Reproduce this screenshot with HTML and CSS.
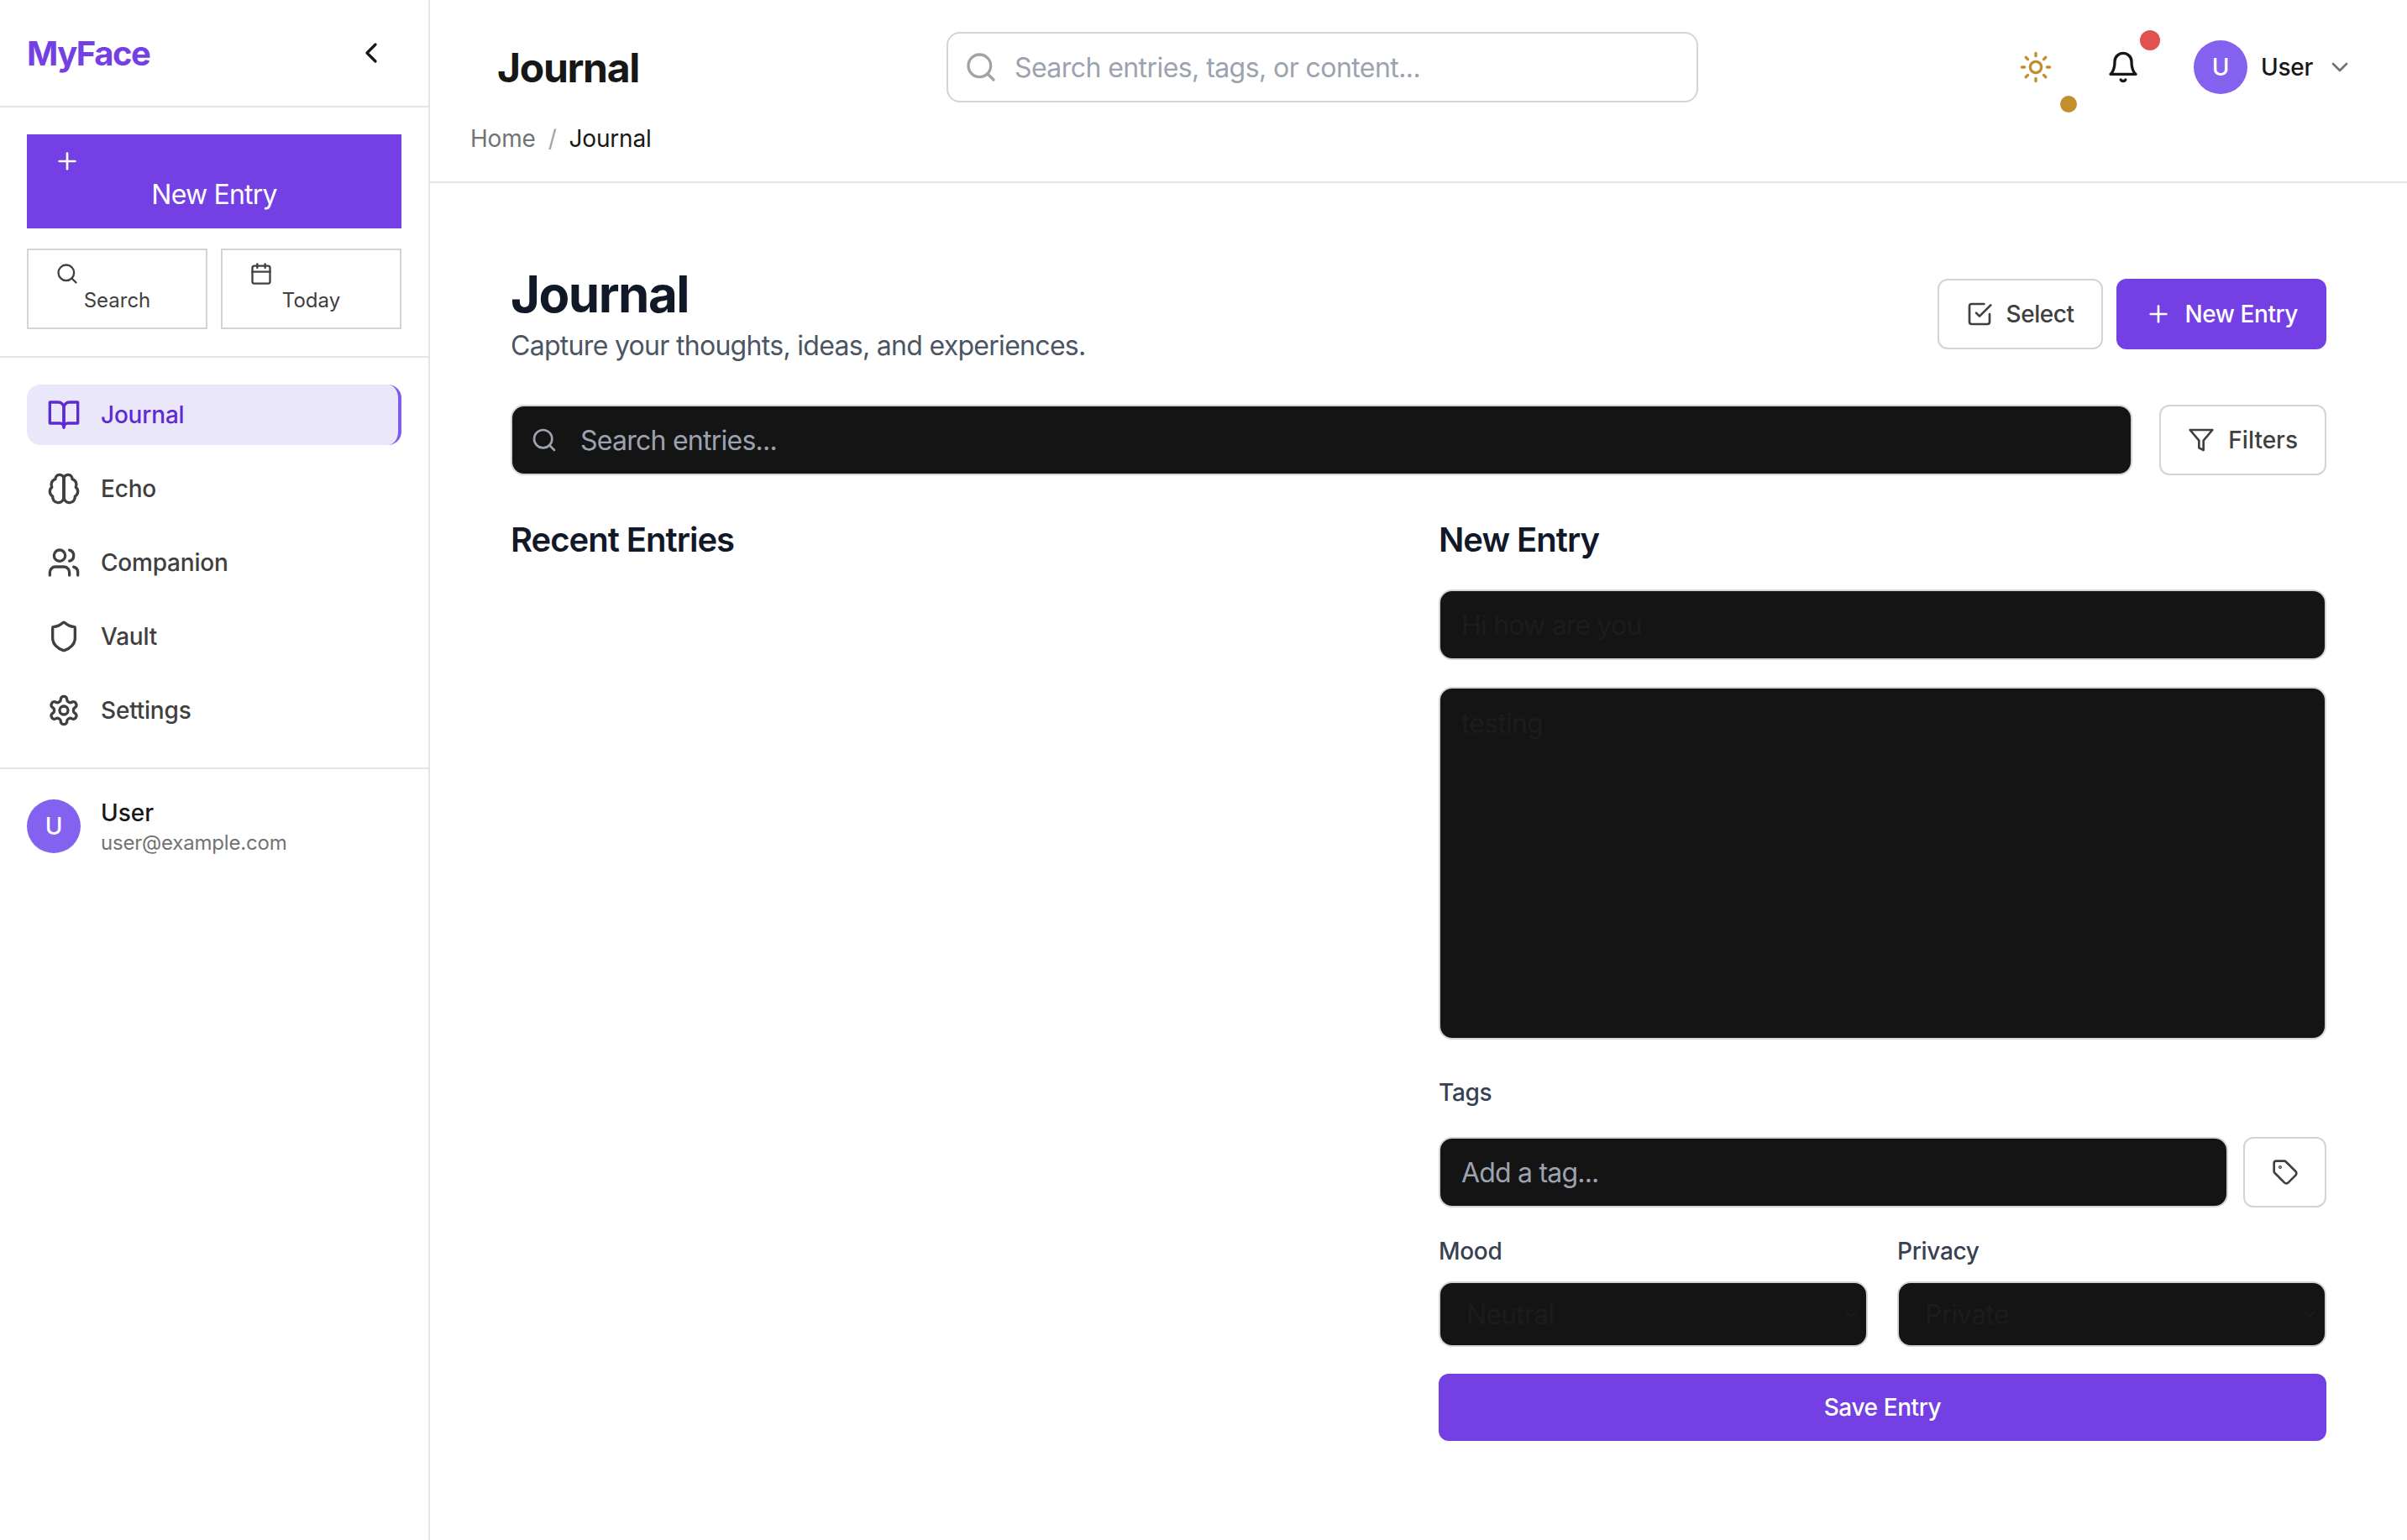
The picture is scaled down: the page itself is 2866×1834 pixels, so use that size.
FILE: index.html
```html
<!DOCTYPE html>
<html lang="en">
<head>
    <meta charset="UTF-8">
    <meta name="viewport" content="width=device-width, initial-scale=1.0">
    <title>MyFace - Journal</title>
    <link rel="stylesheet" href="styles.css">
</head>
<body>
    <!-- icon sprite -->
    <svg class="sprite" xmlns="http://www.w3.org/2000/svg">
        <symbol id="i-chevron-left" viewBox="0 0 24 24"><path d="m15 18-6-6 6-6"/></symbol>
        <symbol id="i-chevron-down" viewBox="0 0 24 24"><path d="m6 9 6 6 6-6"/></symbol>
        <symbol id="i-plus" viewBox="0 0 24 24"><path d="M5 12h14"/><path d="M12 5v14"/></symbol>
        <symbol id="i-search" viewBox="0 0 24 24"><circle cx="11" cy="11" r="8"/><path d="m21 21-4.3-4.3"/></symbol>
        <symbol id="i-calendar" viewBox="0 0 24 24"><path d="M8 2v4"/><path d="M16 2v4"/><rect x="3" y="4" width="18" height="18" rx="2"/><path d="M3 10h18"/></symbol>
        <symbol id="i-book" viewBox="0 0 24 24"><path d="M2 3h6a4 4 0 0 1 4 4v14a3 3 0 0 0-3-3H2z"/><path d="M22 3h-6a4 4 0 0 0-4 4v14a3 3 0 0 1 3-3h7z"/></symbol>
        <symbol id="i-brain" viewBox="0 0 24 24"><path d="M12 5a3 3 0 1 0-5.997.125 4 4 0 0 0-2.526 5.77 4 4 0 0 0 .556 6.588A4 4 0 1 0 12 18Z"/><path d="M12 5a3 3 0 1 1 5.997.125 4 4 0 0 1 2.526 5.77 4 4 0 0 1-.556 6.588A4 4 0 1 1 12 18Z"/><path d="M12 5v13"/></symbol>
        <symbol id="i-users" viewBox="0 0 24 24"><path d="M16 21v-2a4 4 0 0 0-4-4H6a4 4 0 0 0-4 4v2"/><circle cx="9" cy="7" r="4"/><path d="M22 21v-2a4 4 0 0 0-3-3.87"/><path d="M16 3.13a4 4 0 0 1 0 7.75"/></symbol>
        <symbol id="i-shield" viewBox="0 0 24 24"><path d="M20 13c0 5-3.5 7.5-7.66 8.95a1 1 0 0 1-.67-.01C7.5 20.5 4 18 4 13V6a1 1 0 0 1 1-1c2 0 4.5-1.2 6.24-2.72a1.17 1.17 0 0 1 1.52 0C14.51 3.81 17 5 19 5a1 1 0 0 1 1 1z"/></symbol>
        <symbol id="i-settings" viewBox="0 0 24 24"><path d="M12.22 2h-.44a2 2 0 0 0-2 2v.18a2 2 0 0 1-1 1.73l-.43.25a2 2 0 0 1-2 0l-.15-.08a2 2 0 0 0-2.73.73l-.22.38a2 2 0 0 0 .73 2.73l.15.1a2 2 0 0 1 1 1.72v.51a2 2 0 0 1-1 1.74l-.15.09a2 2 0 0 0-.73 2.73l.22.38a2 2 0 0 0 2.73.73l.15-.08a2 2 0 0 1 2 0l.43.25a2 2 0 0 1 1 1.73V20a2 2 0 0 0 2 2h.44a2 2 0 0 0 2-2v-.18a2 2 0 0 1 1-1.73l.43-.25a2 2 0 0 1 2 0l.15.08a2 2 0 0 0 2.73-.73l.22-.39a2 2 0 0 0-.73-2.73l-.15-.08a2 2 0 0 1-1-1.74v-.5a2 2 0 0 1 1-1.74l.15-.09a2 2 0 0 0 .73-2.73l-.22-.38a2 2 0 0 0-2.73-.73l-.15.08a2 2 0 0 1-2 0l-.43-.25a2 2 0 0 1-1-1.73V4a2 2 0 0 0-2-2z"/><circle cx="12" cy="12" r="3"/></symbol>
        <symbol id="i-sun" viewBox="0 0 24 24"><circle cx="12" cy="12" r="4"/><path d="M12 2v2"/><path d="M12 20v2"/><path d="m4.93 4.93 1.41 1.41"/><path d="m17.66 17.66 1.41 1.41"/><path d="M2 12h2"/><path d="M20 12h2"/><path d="m6.34 17.66-1.41 1.41"/><path d="m19.07 4.93-1.41 1.41"/></symbol>
        <symbol id="i-bell" viewBox="0 0 24 24"><path d="M6 8a6 6 0 0 1 12 0c0 7 3 9 3 9H3s3-2 3-9"/><path d="M10.3 21a1.94 1.94 0 0 0 3.4 0"/></symbol>
        <symbol id="i-check" viewBox="0 0 24 24"><path d="m9 11 3 3L22 4"/><path d="M21 12v7a2 2 0 0 1-2 2H5a2 2 0 0 1-2-2V5a2 2 0 0 1 2-2h11"/></symbol>
        <symbol id="i-filter" viewBox="0 0 24 24"><polygon points="22 3 2 3 10 12.46 10 19 14 21 14 12.46 22 3"/></symbol>
        <symbol id="i-tag" viewBox="0 0 24 24"><path d="M12.586 2.586A2 2 0 0 0 11.172 2H4a2 2 0 0 0-2 2v7.172a2 2 0 0 0 .586 1.414l8.704 8.704a2.426 2.426 0 0 0 3.42 0l6.58-6.58a2.426 2.426 0 0 0 0-3.42z"/><circle cx="7.5" cy="7.5" r=".5"/></symbol>
    </svg>

    <div class="app">
        <aside class="sidebar">
            <div class="brand">
                <span class="brand-name">MyFace</span>
                <button class="collapse"><svg class="icon icon-40"><use href="#i-chevron-left"/></svg></button>
            </div>

            <div class="quick">
                <button class="quick-new">
                    <svg class="icon icon-32"><use href="#i-plus"/></svg>
                    New Entry
                </button>
                <div class="quick-row">
                    <button class="quick-btn">
                        <svg class="icon icon-28"><use href="#i-search"/></svg>
                        Search
                    </button>
                    <button class="quick-btn">
                        <svg class="icon icon-28"><use href="#i-calendar"/></svg>
                        Today
                    </button>
                </div>
            </div>

            <nav class="nav">
                <a class="nav-item active" href="#"><svg class="icon icon-40"><use href="#i-book"/></svg>Journal</a>
                <a class="nav-item" href="#"><svg class="icon icon-40"><use href="#i-brain"/></svg>Echo</a>
                <a class="nav-item" href="#"><svg class="icon icon-40"><use href="#i-users"/></svg>Companion</a>
                <a class="nav-item" href="#"><svg class="icon icon-40"><use href="#i-shield"/></svg>Vault</a>
                <a class="nav-item" href="#"><svg class="icon icon-40"><use href="#i-settings"/></svg>Settings</a>
            </nav>

            <div class="account">
                <span class="avatar">U</span>
                <div>
                    <div class="account-name">User</div>
                    <div class="account-mail">user@example.com</div>
                </div>
            </div>
        </aside>

        <div class="main">
            <header class="topbar">
                <div class="topbar-row">
                    <div class="topbar-title">Journal</div>
                    <div class="topbar-search">
                        <svg class="icon icon-40"><use href="#i-search"/></svg>
                        <input type="text" placeholder="Search entries, tags, or content...">
                    </div>
                    <div class="topbar-actions">
                        <button class="icon-btn sun">
                            <svg class="icon icon-40"><use href="#i-sun"/></svg>
                            <span class="dot dot-sun"></span>
                        </button>
                        <button class="icon-btn">
                            <svg class="icon icon-40"><use href="#i-bell"/></svg>
                            <span class="dot dot-bell"></span>
                        </button>
                        <div class="user-menu">
                            <span class="avatar">U</span>
                            <span class="user-name">User</span>
                            <svg class="icon icon-32 chevron"><use href="#i-chevron-down"/></svg>
                        </div>
                    </div>
                </div>
                <div class="crumbs">
                    <span class="crumb-home">Home</span>
                    <span class="crumb-sep">/</span>
                    <span class="crumb-current">Journal</span>
                </div>
            </header>

            <main class="content">
                <div class="page-head">
                    <div>
                        <h1>Journal</h1>
                        <p>Capture your thoughts, ideas, and experiences.</p>
                    </div>
                    <div class="page-actions">
                        <button class="btn btn-outline"><svg class="icon icon-32"><use href="#i-check"/></svg>Select</button>
                        <button class="btn btn-primary"><svg class="icon icon-32"><use href="#i-plus"/></svg>New Entry</button>
                    </div>
                </div>

                <div class="search-row">
                    <div class="dark-search">
                        <svg class="icon icon-32"><use href="#i-search"/></svg>
                        <input type="text" placeholder="Search entries...">
                    </div>
                    <button class="btn btn-outline btn-filters"><svg class="icon icon-32"><use href="#i-filter"/></svg>Filters</button>
                </div>

                <div class="columns">
                    <section>
                        <h2>Recent Entries</h2>
                    </section>

                    <section class="entry-form">
                        <h2>New Entry</h2>
                        <input class="field" type="text" placeholder="Hi how are you">
                        <textarea class="field field-area" placeholder="testing"></textarea>

                        <label class="label label-tags">Tags</label>
                        <div class="tag-row">
                            <input class="field field-light" type="text" placeholder="Add a tag...">
                            <button class="btn btn-outline tag-btn"><svg class="icon icon-32"><use href="#i-tag"/></svg></button>
                        </div>

                        <div class="select-row">
                            <div>
                                <label class="label">Mood</label>
                                <div class="select-wrap">
                                    <select class="field-select"><option>Neutral</option></select>
                                    <svg class="icon icon-24 select-arrow"><use href="#i-chevron-down"/></svg>
                                </div>
                            </div>
                            <div>
                                <label class="label">Privacy</label>
                                <div class="select-wrap">
                                    <select class="field-select"><option>Private</option></select>
                                    <svg class="icon icon-24 select-arrow"><use href="#i-chevron-down"/></svg>
                                </div>
                            </div>
                        </div>

                        <button class="save-btn">Save Entry</button>
                    </section>
                </div>
            </main>
        </div>
    </div>
</body>
</html>
```

FILE: styles.css
```css
* {
    box-sizing: border-box;
}
body {
    margin: 0;
    background: #fff;
    color: #171717;
    font-family: Inter, "Noto Sans", sans-serif;
}
button, input, select, textarea {
    font-family: inherit;
}
button {
    cursor: pointer;
}
.sprite {
    display: none;
}
.icon {
    display: block;
    flex-shrink: 0;
    fill: none;
    stroke: currentColor;
    stroke-width: 2;
    stroke-linecap: round;
    stroke-linejoin: round;
}
.icon-24 { width: 24px; height: 24px; }
.icon-28 { width: 28px; height: 28px; }
.icon-32 { width: 32px; height: 32px; }
.icon-40 { width: 40px; height: 40px; }

.app {
    display: flex;
    min-height: 1834px;
}

/* sidebar */
.sidebar {
    width: 512px;
    flex-shrink: 0;
    border-right: 2px solid #e5e5e5;
}
.brand {
    display: flex;
    align-items: center;
    justify-content: space-between;
    height: 128px;
    padding: 0 32px;
    border-bottom: 2px solid #e5e5e5;
}
.brand-name {
    color: #7540e3;
    font-size: 40px;
    font-weight: 700;
    letter-spacing: -1.5px;
}
.collapse {
    padding: 0;
    margin-right: 16px;
    border: none;
    background: none;
    color: #171717;
}
.quick {
    padding: 32px;
    border-bottom: 2px solid #e5e5e5;
}
.quick-new {
    display: block;
    width: 100%;
    height: 112px;
    padding: 16px 32px;
    border: none;
    background: #7540e3;
    color: #fff;
    font-size: 32px;
    letter-spacing: -0.8px;
    line-height: 48px;
}
.quick-row {
    display: grid;
    grid-template-columns: 1fr 1fr;
    gap: 16px;
    margin-top: 24px;
}
.quick-btn {
    display: block;
    height: 96px;
    padding: 14px 32px;
    border: 2px solid #d4d4d4;
    background: #fff;
    color: #404040;
    font-size: 24px;
    line-height: 36px;
}
.nav {
    display: flex;
    flex-direction: column;
    gap: 16px;
    padding: 32px;
    border-bottom: 2px solid #e5e5e5;
}
.nav-item {
    display: flex;
    align-items: center;
    gap: 24px;
    height: 72px;
    padding: 0 24px;
    border-radius: 16px;
    color: #404040;
    font-size: 28px;
    font-weight: 500;
    letter-spacing: -0.2px;
    text-decoration: none;
}
.nav-item.active {
    background: #ebe7fb;
    border-right: 4px solid #7c5ce8;
    color: #5e2bd1;
}
.account {
    display: flex;
    align-items: center;
    gap: 24px;
    padding: 32px;
}
.avatar {
    display: flex;
    align-items: center;
    justify-content: center;
    width: 64px;
    height: 64px;
    border-radius: 50%;
    background: #8561f0;
    color: #fff;
    font-size: 28px;
    font-weight: 500;
}
.account-name {
    font-size: 28px;
    font-weight: 500;
    line-height: 40px;
}
.account-mail {
    color: #737373;
    font-size: 24px;
    letter-spacing: -0.2px;
    line-height: 32px;
}

/* top bar */
.main {
    flex: 1;
    min-width: 0;
}
.topbar {
    height: 218px;
    padding: 38px 64px 0 48px;
    border-bottom: 2px solid #e5e5e5;
}
.topbar-row {
    display: flex;
    align-items: center;
    height: 84px;
}
.topbar-title {
    width: 567px;
    padding-left: 32px;
    font-size: 48px;
    font-weight: 700;
    letter-spacing: -1.3px;
}
.topbar-search {
    display: flex;
    align-items: center;
    gap: 20px;
    width: 895px;
    height: 84px;
    padding: 0 19px;
    border: 2px solid #d4d4d4;
    border-radius: 16px;
    color: #a3a3a3;
}
.topbar-search input {
    flex: 1;
    min-width: 0;
    padding: 0;
    border: none;
    outline: none;
    background: none;
    font-size: 32px;
    letter-spacing: -0.57px;
}
.topbar-search input::placeholder {
    color: #9ca3af;
}
.topbar-actions {
    display: flex;
    align-items: center;
    gap: 64px;
    margin-left: auto;
}
.icon-btn {
    position: relative;
    padding: 0;
    border: none;
    background: none;
    color: #171717;
}
.icon-btn.sun {
    color: #c28e2e;
}
.dot {
    position: absolute;
    border-radius: 50%;
}
.dot-sun {
    top: 54px;
    left: 49px;
    width: 20px;
    height: 20px;
    background: #c28e2e;
}
.dot-bell {
    top: -24px;
    left: 40px;
    width: 24px;
    height: 24px;
    background: #e05252;
}
.user-menu {
    display: flex;
    align-items: center;
    gap: 16px;
}
.user-name {
    font-size: 28px;
    font-weight: 500;
    letter-spacing: -0.3px;
}
.chevron {
    color: #737373;
}
.crumbs {
    display: flex;
    gap: 15px;
    margin-top: 23px;
    font-size: 28px;
    letter-spacing: -0.2px;
    line-height: 40px;
}
.crumb-home {
    color: #737373;
}
.crumb-sep {
    color: #a3a3a3;
}

/* page */
.content {
    padding: 96px;
}
.page-head {
    display: flex;
    align-items: center;
    justify-content: space-between;
}
h1 {
    margin: 0;
    color: #111827;
    font-size: 60px;
    font-weight: 700;
    letter-spacing: -1.5px;
    line-height: 72px;
}
.page-head p {
    margin: 2px 0 -2px;
    color: #4b5563;
    font-size: 32px;
    letter-spacing: -0.7px;
    line-height: 48px;
}
.page-actions {
    display: flex;
    gap: 16px;
}
.btn {
    display: flex;
    align-items: center;
    gap: 16px;
    height: 84px;
    padding: 0 32px;
    border-radius: 12px;
    font-size: 28px;
    font-weight: 500;
    letter-spacing: -0.45px;
}
.btn-outline {
    border: 2px solid #d4d4d4;
    background: #fff;
    color: #404040;
}
.btn-primary {
    border: 2px solid #7540e3;
    background: #7540e3;
    color: #fff;
}
.btn-filters {
    letter-spacing: 0;
}
.search-row {
    display: flex;
    gap: 32px;
    margin-top: 48px;
}
.dark-search {
    display: flex;
    flex: 1;
    align-items: center;
    gap: 27px;
    height: 84px;
    padding: 0 22px;
    border: 2px solid #d1d5db;
    border-radius: 16px;
    background: #141414;
    color: #9ca3af;
}
.dark-search input {
    flex: 1;
    padding: 0;
    border: none;
    outline: none;
    background: none;
    font-size: 32px;
    letter-spacing: -0.75px;
}
.dark-search input::placeholder {
    color: #9ca3af;
}
.columns {
    display: grid;
    grid-template-columns: 1fr 1fr;
    gap: 48px;
    margin-top: 48px;
}
h2 {
    margin: 0;
    color: #111827;
    font-size: 40px;
    font-weight: 600;
    letter-spacing: -1px;
    line-height: 58px;
}
.field, .field-select {
    display: block;
    width: 100%;
    border: 2px solid #d1d5db;
    border-radius: 16px;
    outline: none;
    background: #141414;
    font-size: 32px;
    letter-spacing: -0.8px;
}
.field {
    height: 84px;
    margin-top: 30px;
    padding: 0 25px;
}
.field::placeholder {
    color: #1c1c1c;
}
.field-area {
    height: 420px;
    margin-top: 32px;
    padding: 22px 25px;
    resize: none;
}
.field-light::placeholder {
    color: #9ca3af;
}
.label {
    display: block;
    margin-bottom: 16px;
    color: #374151;
    font-size: 28px;
    font-weight: 500;
    letter-spacing: -0.3px;
    line-height: 40px;
}
.label-tags {
    margin-top: 43px;
    margin-bottom: 33px;
}
.tag-row {
    display: flex;
    gap: 18px;
}
.tag-row .field {
    flex: 1;
    margin-top: 0;
}
.tag-btn {
    justify-content: center;
    width: 99px;
    padding: 0;
}
.select-row {
    display: grid;
    grid-template-columns: 1fr 1fr;
    gap: 35px;
    margin-top: 32px;
}
.select-wrap {
    position: relative;
}
.field-select {
    height: 78px;
    padding: 0 31px;
    appearance: none;
    color: #1c1c1c;
}
.select-arrow {
    position: absolute;
    top: 27px;
    right: 8px;
    color: #1c1c1c;
}
.save-btn {
    display: block;
    width: 100%;
    height: 80px;
    margin-top: 32px;
    border: none;
    border-radius: 12px;
    background: #7540e3;
    color: #fff;
    font-size: 28px;
    font-weight: 500;
    letter-spacing: -0.4px;
}
```
